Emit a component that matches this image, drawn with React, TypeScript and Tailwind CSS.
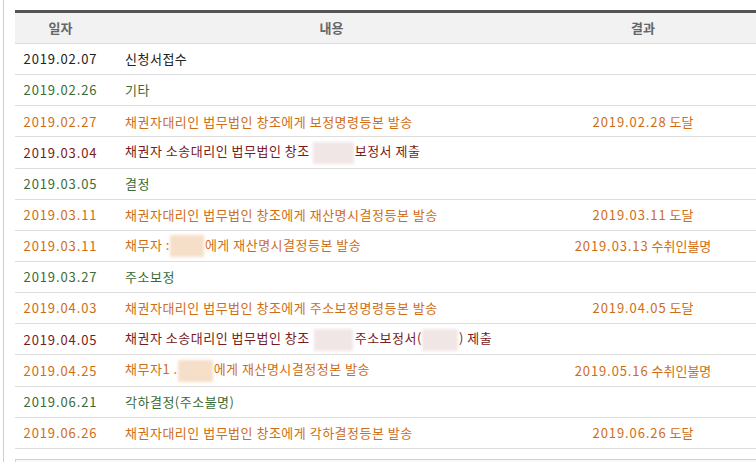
import React from 'react';

type Part = string | { blur: number; tone: 'red' | 'orange'; ml?: number; mr?: number };

type Row = {
  date: string;
  content: Part[];
  result?: string;
  color: string;
};

const BLACK = 'text-[#222222]';
const GREEN = 'text-[#3b6b35]';
const ORANGE = 'text-[#cf6d16]';
const MAROON = 'text-[#7a1a1a]';

const rows: Row[] = [
  { date: '2019.02.07', content: ['신청서접수'], color: BLACK },
  { date: '2019.02.26', content: ['기타'], color: GREEN },
  {
    date: '2019.02.27',
    content: ['채권자대리인 법무법인 창조에게 보정명령등본 발송'],
    result: '2019.02.28 도달',
    color: ORANGE,
  },
  {
    date: '2019.03.04',
    content: ['채권자 소송대리인 법무법인 창조', { blur: 41, tone: 'red', ml: 3, mr: 1 }, '보정서 제출'],
    color: MAROON,
  },
  { date: '2019.03.05', content: ['결정'], color: GREEN },
  {
    date: '2019.03.11',
    content: ['채권자대리인 법무법인 창조에게 재산명시결정등본 발송'],
    result: '2019.03.11 도달',
    color: ORANGE,
  },
  {
    date: '2019.03.11',
    content: ['채무자 :', { blur: 34, tone: 'orange', ml: 0, mr: 1 }, '에게 재산명시결정등본 발송'],
    result: '2019.03.13 수취인불명',
    color: ORANGE,
  },
  { date: '2019.03.27', content: ['주소보정'], color: GREEN },
  {
    date: '2019.04.03',
    content: ['채권자대리인 법무법인 창조에게 주소보정명령등본 발송'],
    result: '2019.04.05 도달',
    color: ORANGE,
  },
  {
    date: '2019.04.05',
    content: [
      '채권자 소송대리인 법무법인 창조',
      { blur: 39, tone: 'red', ml: 4, mr: 2 },
      '주소보정서(',
      { blur: 36, tone: 'red', ml: 0, mr: 1 },
      ') 제출',
    ],
    color: MAROON,
  },
  {
    date: '2019.04.25',
    content: ['채무자1 .', { blur: 35, tone: 'orange', ml: 0, mr: 1 }, '에게 재산명시결정정본 발송'],
    result: '2019.05.16 수취인불명',
    color: ORANGE,
  },
  { date: '2019.06.21', content: ['각하결정(주소불명)'], color: GREEN },
  {
    date: '2019.06.26',
    content: ['채권자대리인 법무법인 창조에게 각하결정등본 발송'],
    result: '2019.06.26 도달',
    color: ORANGE,
  },
];

function Blur({ width, tone, ml = 0, mr = 0 }: { width: number; tone: 'red' | 'orange'; ml?: number; mr?: number }) {
  // redacted names are shown as a soft smudge
  return (
    <span
      className={
        'inline-block h-[22px] align-middle blur-[1.5px] ' +
        (tone === 'red' ? 'bg-[#f1e6e6]' : 'bg-[#f6dfc9]')
      }
      style={{ width, marginLeft: ml, marginRight: mr }}
    />
  );
}

function Result({ text }: { text: string }) {
  const [d, ...rest] = text.split(' ');
  return (
    <>
      <span className="tracking-[0.9px]">{d}</span> <span>{rest.join(' ')}</span>
    </>
  );
}

export default function App() {
  return (
    <div
      className="w-[756px] h-[462px] overflow-hidden bg-white relative"
      style={{ fontFamily: '"Noto Sans CJK KR", "Malgun Gothic", sans-serif' }}
    >
      <div className="flex h-full">
        <div className="w-[3px] shrink-0" />
        <div className="w-px shrink-0 bg-[#cfcfcf]" />
        <div className="flex-1 pl-[11px] pt-[10px] flex flex-col">
          {/* table */}
          <div className="border-t-[3px] border-[#555555]">
            <div className="grid grid-cols-[91px_451px_172px_1fr] h-[31px] bg-[#f2f2f2] border-b border-[#dcdcdc] items-center text-[13px] font-bold text-[#666666]">
              <div className="text-center">일자</div>
              <div className="text-center">내용</div>
              <div className="text-center">결과</div>
              <div />
            </div>
            {rows.map((r, i) => (
              <div
                key={i}
                className={
                  'grid grid-cols-[91px_451px_172px_1fr] h-[31.15px] border-b border-[#dddddd] items-center text-[13px] ' +
                  r.color
                }
              >
                <div className="text-center tracking-[0.9px]">{r.date}</div>
                <div className="pl-[19px] whitespace-nowrap tracking-[0.5px]">
                  {r.content.map((p, j) =>
                    typeof p === 'string' ? (
                      <span key={j}>{p}</span>
                    ) : (
                      <Blur key={j} width={p.blur} tone={p.tone} ml={p.ml} mr={p.mr} />
                    ),
                  )}
                </div>
                <div className="text-center whitespace-nowrap">{r.result ? <Result text={r.result} /> : ''}</div>
                <div />
              </div>
            ))}
          </div>
          <div className="mt-[10px] border-t border-l border-[#cdd3dc] bg-[#f8f9fb] h-[20px]" />
        </div>
      </div>
    </div>
  );
}
